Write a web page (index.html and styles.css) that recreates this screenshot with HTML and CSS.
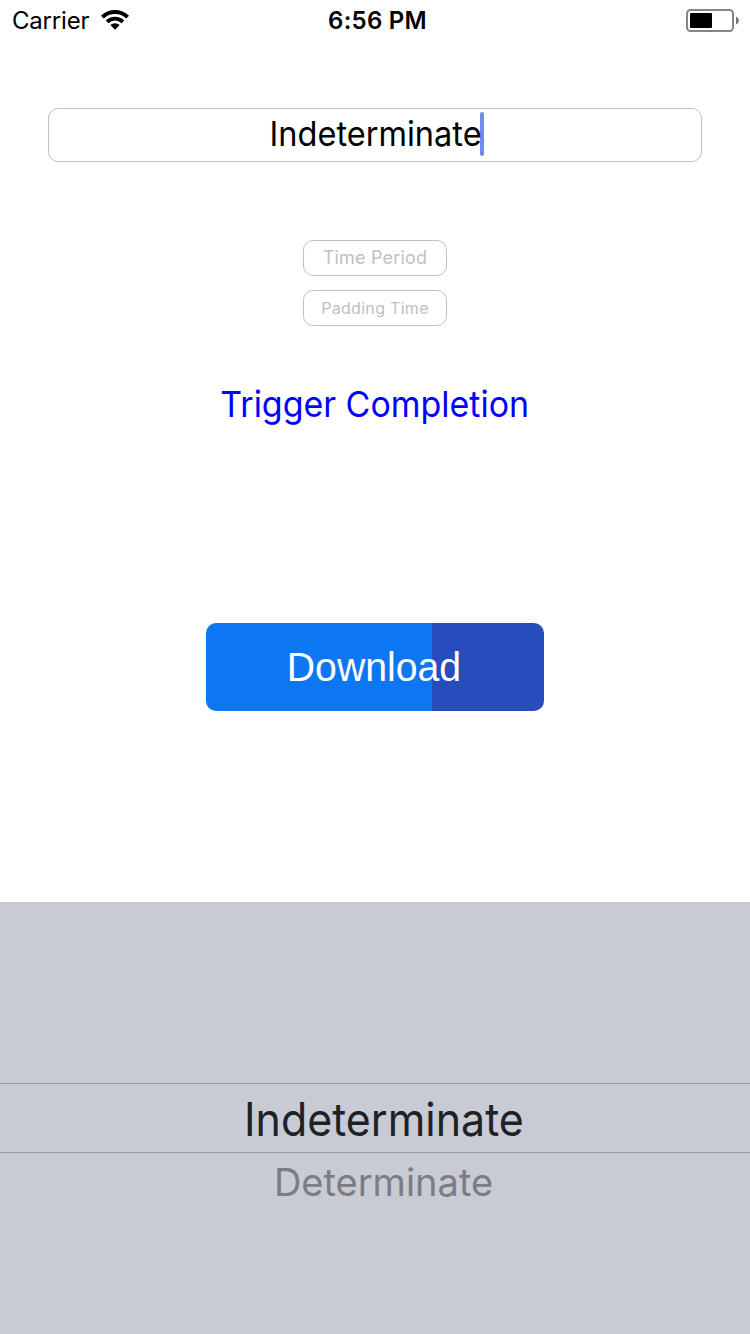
FILE: index.html
```html
<!DOCTYPE html>
<html lang="en">
<head>
<meta charset="utf-8">
<title>Download Button</title>
<link rel="stylesheet" href="styles.css">
</head>
<body>
<main class="screen">
  <header class="status-bar">
    <div class="carrier">
      <span class="carrier-name">Carrier</span>
      <svg class="wifi" width="28" height="20" viewBox="0 0 28 20">
        <path d="M0 5.7A20.2 20.2 0 0 1 28 5.7L25.2 8.5A16.2 16.2 0 0 0 2.8 8.5Z"/>
        <path d="M4.8 10.5A13.2 13.2 0 0 1 23.2 10.5L20.5 13.2A9.4 9.4 0 0 0 7.5 13.2Z"/>
        <path d="M9.4 15.1A6.6 6.6 0 0 1 18.6 15.1L14 19.8Z"/>
      </svg>
    </div>
    <div class="clock">6:56 PM</div>
    <svg class="battery" width="54" height="24" viewBox="0 0 54 24">
      <rect x="1" y="1" width="46" height="21" rx="3.5" fill="none" stroke="#858585" stroke-width="2"/>
      <rect x="4" y="4" width="22" height="15" rx="1"/>
      <path d="M50 7.500Q53 9 53 11.5T50 15.500Z" fill="#777"/>
    </svg>
  </header>
  <section class="form">
    <div class="field mode"><span class="mode-text">Indeterminate</span><i class="caret"></i></div>
    <div class="field small period"><span>Time Period</span></div>
    <div class="field small padding"><span>Padding Time</span></div>
    <div class="trigger"><span>Trigger Completion</span></div>
    <div class="download"><span>Download</span></div>
  </section>
  <section class="picker">
    <div class="option selected"><span>Indeterminate</span></div>
    <div class="option next"><span>Determinate</span></div>
  </section>
</main>
</body>
</html>
```
FILE: styles.css
```css
* { box-sizing: border-box; }
body { margin: 0; background: #fff; }
.screen {
  width: 750px;
  height: 1334px;
  display: flex;
  flex-direction: column;
  font-family: Inter, "Liberation Sans", sans-serif;
  color: #000;
  white-space: nowrap;
  overflow: hidden;
}
.status-bar {
  height: 42px;
  padding: 0 10px 0 12px;
  display: grid;
  grid-template-columns: 1fr auto 1fr;
  align-items: center;
  font-size: 24px;
  line-height: 42px;
}
.carrier { display: flex; align-items: center; gap: 12px; }
.carrier-name { letter-spacing: -0.2px; }
.wifi { margin-bottom: 2px; }
.clock { font-weight: 600; letter-spacing: 0.25px; padding-left: 3px; }
.battery { justify-self: end; }
.form {
  height: 860px;
  padding-top: 66px;
  display: flex;
  flex-direction: column;
  align-items: center;
}
.field {
  display: flex;
  align-items: center;
  justify-content: center;
  border: 1px solid #c0c0c2;
  border-radius: 10px;
}
.mode { width: 654px; height: 54px; font-size: 34px; line-height: 50px; padding: 0 0 2px 0; }
.mode-text { transform: scaleX(0.957); transform-origin: right; }
.caret { width: 4px; height: 44px; border-radius: 2px; background: #7189f5; margin: 0 6px 0 -2px; }
.small { width: 144px; height: 36px; color: #c0c0c5; }
.period { margin-top: 78px; padding-bottom: 2px; font-size: 18px; letter-spacing: 0.2px; }
.padding { margin-top: 14px; padding-bottom: 1px; font-size: 16px; letter-spacing: 0.3px; }
.trigger { margin-top: 55px; height: 46px; line-height: 46px; font-size: 36px; color: #00f; transform: scaleX(0.943); }
.download {
  margin-top: 196px;
  width: 338px;
  height: 88px;
  border-radius: 10px;
  background: linear-gradient(90deg, #0d76f3 226px, #264dbb 226px);
  color: #fff;
  font: 40px/88px "Liberation Sans", sans-serif;
  text-align: center;
  padding-right: 2px;
}
.download span { display: inline-block; transform: scaleX(0.98); }
.picker {
  height: 432px;
  padding-top: 181px;
  background: #c8cbd4;
  text-align: center;
}
.option span { display: inline-block; }
.selected {
  height: 70px;
  line-height: 70px;
  border-top: 1px solid #999ca4;
  border-bottom: 1px solid #999ca4;
  padding-left: 18px;
  font-size: 46px;
  color: #202124;
}
.selected span { transform: scaleX(0.933); }
.next { height: 60px; line-height: 58px; padding-left: 17px; font-size: 38px; color: #7c7d82; }
```
